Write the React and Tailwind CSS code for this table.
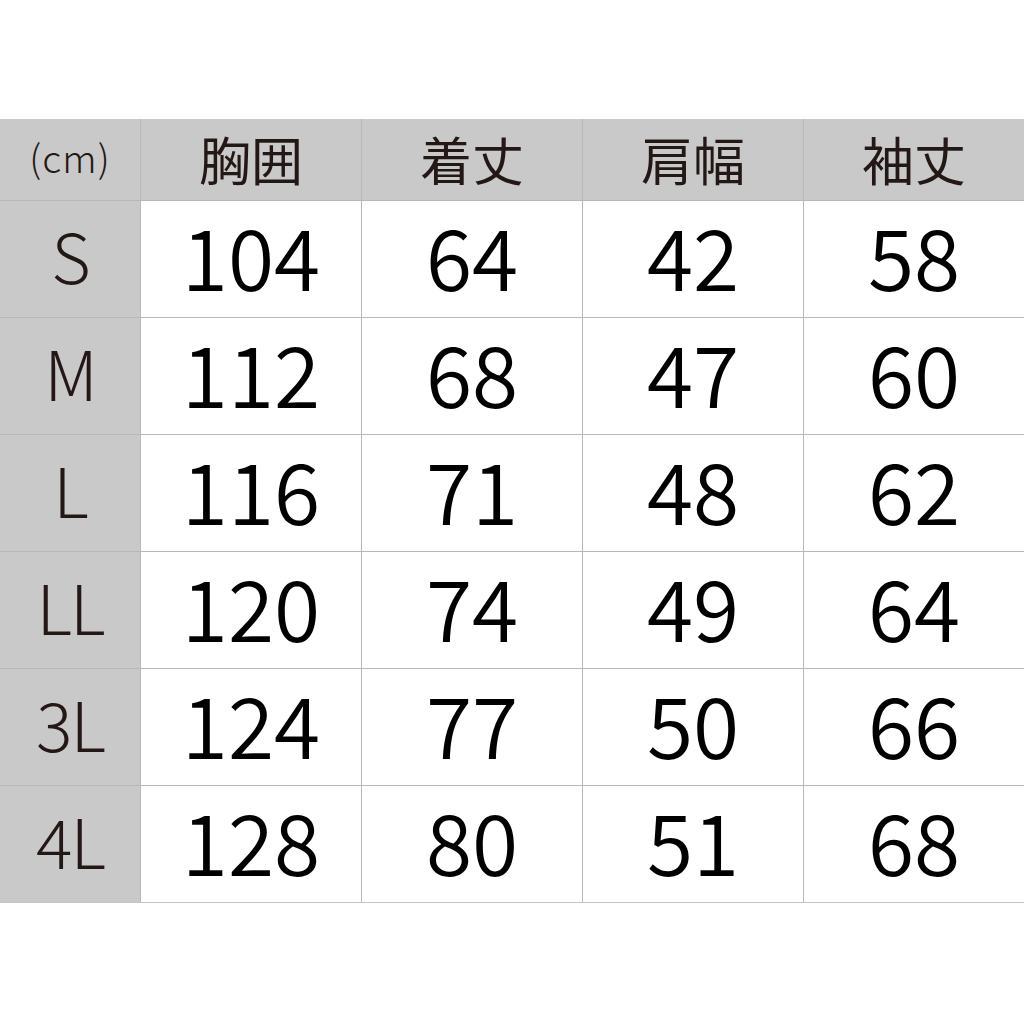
const HEAD = ['胸囲', '着丈', '肩幅', '袖丈']

const ROWS = [
  ['S', '104', '64', '42', '58'],
  ['M', '112', '68', '47', '60'],
  ['L', '116', '71', '48', '62'],
  ['LL', '120', '74', '49', '64'],
  ['3L', '124', '77', '50', '66'],
  ['4L', '128', '80', '51', '68'],
]

export default function App() {
  return (
    <div
      className="w-[1024px] h-[1024px] bg-white pt-[119px]"
      style={{ fontFamily: '"Noto Sans CJK JP", "Noto Sans", sans-serif' }}
    >
      <div className="grid grid-cols-[140px_220px_220px_220px_220px] grid-rows-[81px_repeat(6,116px)] gap-px bg-[#b8b8b8] border-b border-[#c4c4c4]">
        <div className="bg-[#c9c9c9] flex items-center justify-center text-[38px] leading-none text-[#231815] font-light pb-[6px] tracking-[1px]">
          (cm)
        </div>
        {HEAD.map((h) => (
          <div key={h} className="bg-[#c9c9c9] flex items-center justify-center text-[52px] leading-none text-[#231815] pb-[2px]">
            {h}
          </div>
        ))}
        {ROWS.map(([size, ...vals]) => (
          <div key={size} className="contents">
            <div className="bg-[#c9c9c9] flex items-center justify-center text-[68px] leading-none font-light text-[#231815] tracking-[-2px] pb-[8px]">
              {size}
            </div>
            {vals.map((v, i) => (
              <div key={i} className="bg-white flex items-center justify-center text-[84px] leading-none font-[350] text-black pb-[8px]">
                {v}
              </div>
            ))}
          </div>
        ))}
      </div>
    </div>
  )
}
